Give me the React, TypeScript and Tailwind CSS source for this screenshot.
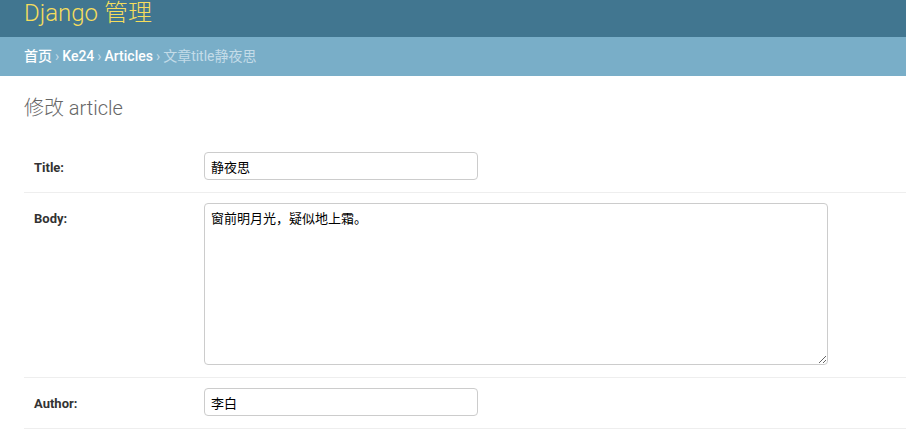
import React from "react";

const Row = ({ label, children }: { label: string; children: React.ReactNode }) => (
  <div className="flex items-start pt-[10px] pb-[12px] pl-[10px] border-b border-[#eeeeee]">
    <label className="w-[170px] shrink-0 pt-[6px] text-[13px] font-bold text-[#333333]">
      {label}
    </label>
    {children}
  </div>
);

export default function App() {
  return (
    <div
      className="min-h-[434px] bg-white"
      style={{ fontFamily: 'Roboto, "Noto Sans CJK SC", sans-serif' }}
    >
      <div className="h-[37px] bg-[#417690] px-[24px] overflow-hidden">
        <div className="-mt-[1px] text-[24px] leading-[28px] font-light text-[#f5dd5d]">
          Django 管理
        </div>
      </div>
      <div className="h-[39px] bg-[#79aec8] px-[24px] flex items-center text-[14px] text-white">
        <span className="font-medium">首页</span>
        <span className="px-[3px] text-[#c4dce8]">›</span>
        <span className="font-medium">Ke24</span>
        <span className="px-[3px] text-[#c4dce8]">›</span>
        <span className="font-medium">Articles</span>
        <span className="px-[3px] text-[#c4dce8]">›</span>
        <span className="text-[#c4dce8]">文章title静夜思</span>
      </div>
      <div className="pt-[20px] pl-[24px]">
        <h1 className="text-[20px] leading-[24px] font-light text-[#666666] mb-[22px]">
          修改 article
        </h1>
        <div>
          <Row label="Title:">
            <input
              defaultValue="静夜思"
              className="w-[274px] h-[28px] px-[6px] border border-[#cccccc] rounded-[4px] text-[13px] text-black outline-none"
              style={{ fontFamily: '"Noto Sans CJK SC", sans-serif' }}
            />
          </Row>
          <Row label="Body:">
            <textarea
              defaultValue="窗前明月光，疑似地上霜。"
              className="w-[624px] h-[162px] px-[6px] py-[4px] border border-[#cccccc] rounded-[4px] text-[13px] text-black outline-none resize"
              style={{ fontFamily: '"Noto Sans CJK SC", sans-serif' }}
            />
          </Row>
          <Row label="Author:">
            <input
              defaultValue="李白"
              className="w-[274px] h-[28px] px-[6px] border border-[#cccccc] rounded-[4px] text-[13px] text-black outline-none"
              style={{ fontFamily: '"Noto Sans CJK SC", sans-serif' }}
            />
          </Row>
        </div>
      </div>
    </div>
  );
}
